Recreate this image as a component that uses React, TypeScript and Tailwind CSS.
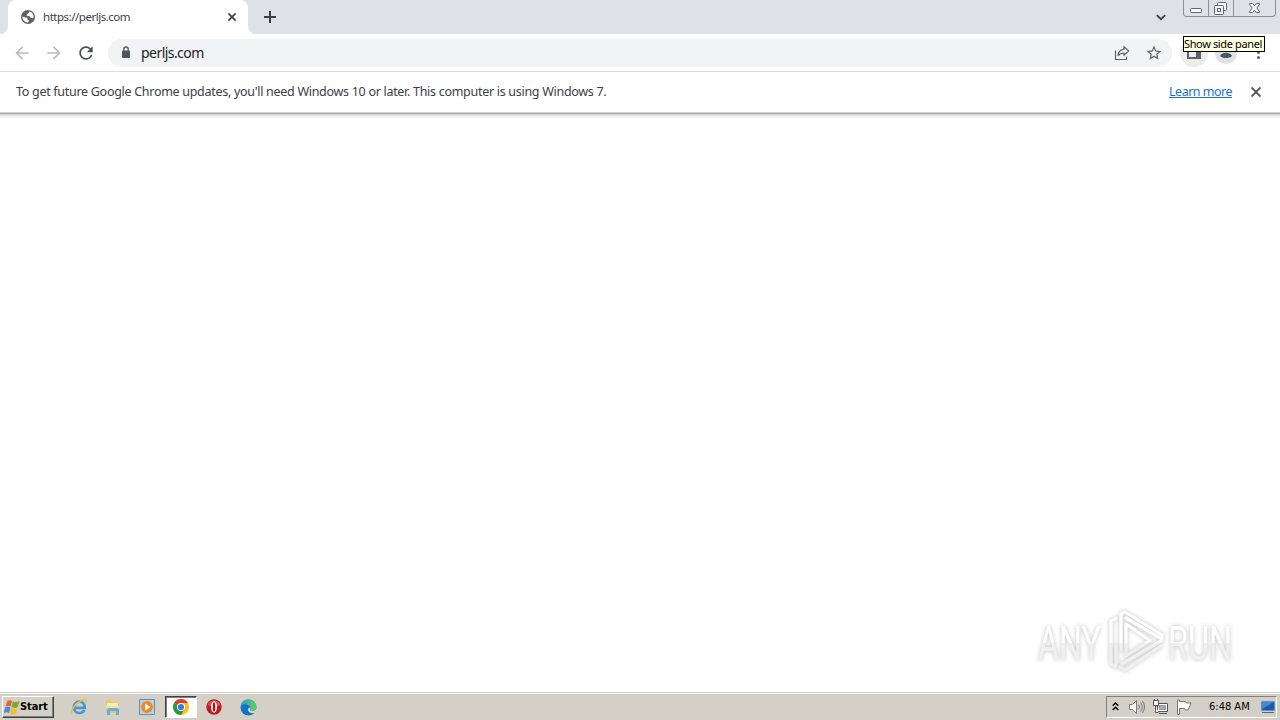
import React from 'react';
import { MdArrowBack, MdArrowForward, MdRefresh, MdStarBorder } from 'react-icons/md';

const TabStrip: React.FC = () => (
  <div className="h-[34px] flex bg-[#dee1e6] text-[#3c4043]">
    <div className="w-2 bg-white">
      <div className="h-full bg-[#dee1e6] rounded-br-lg" />
    </div>
    <div className="w-60 h-full flex items-center bg-white rounded-t-lg pl-[13px] pr-3">
      <svg className="w-[14px] h-[14px] shrink-0" viewBox="0 0 14 14">
        <circle cx="7" cy="7" r="7" fill="#5f6368" />
        <path d="M1.5 6.4 4.2 7.6 6.4 7.8V9.5L8 10.600 7 12.5C4 12.400 1.300 9.900 1.500 6.400ZM8.200 1.600 7.500 3.300 5.700 4.300V5.700L8.600 6.200 9.200 7.500 11.600 8.200C12.200 7.700 12.600 7.100 12.600 6.500 12.400 3.700 10.500 2 8.200 1.600Z" fill="#fff" />
      </svg>
      <span className="ml-2 text-[11.5px] leading-4 whitespace-nowrap tracking-[-0.48px]">https://perljs.com</span>
      <svg className="ml-auto w-2 h-2" viewBox="0 0 8 8" stroke="currentColor" strokeWidth="1.7">
        <path d="m.4.4 7.200 7.200M7.600.4.4 7.600" />
      </svg>
    </div>
    <div className="w-2 bg-white">
      <div className="h-full bg-[#dee1e6] rounded-bl-lg" />
    </div>
    <div className="flex-1 flex items-center">
      <svg className="ml-2 w-3 h-3" viewBox="0 0 12 12" stroke="currentColor" strokeWidth="2">
        <path d="M6 0v12M0 6h12" />
      </svg>
      <svg className="ml-auto mr-[17px] w-[10px] h-[7px]" viewBox="0 0 10 7" fill="none" stroke="currentColor" strokeWidth="1.8">
        <path d="m.8 1.2 4.2 4 4.2-4" />
      </svg>
      <WindowButtons />
    </div>
  </div>
);

const WindowButtons: React.FC = () => (
  <div className="self-start mr-1 w-[93px] h-[17px] flex border border-t-0 border-[#8b8f96] rounded-b-[4px] text-[#62666c]">
    <div className="w-[25px] border-r border-[#8b8f96]">
      <svg className="w-6 h-4" viewBox="0 0 24 16" fill="#f4f5f6" stroke="currentColor">
        <rect x="6.5" y="8.5" width="11" height="4" rx="1" />
      </svg>
    </div>
    <div className="w-[25px] border-r border-[#8b8f96]">
      <svg className="w-6 h-4" viewBox="0 0 24 16" fill="#f4f5f6" stroke="currentColor">
        <rect x="8.5" y="2.5" width="9" height="8" rx="1" />
        <rect x="5.5" y="5.5" width="9" height="9" rx="1" />
        <rect x="8.5" y="8.5" width="3" height="3" />
      </svg>
    </div>
    <svg className="w-[41px] h-4" viewBox="0 0 41 16" fill="#f4f5f6" stroke="currentColor">
      <path d="M15.500 3.500h3.200l1.800 2.200 1.800-2.200h3.200v1L22.800 8l2.700 3.500v1h-3.200l-1.800-2.200-1.800 2.200h-3.200v-1L18.200 8l-2.700-3.500z" />
    </svg>
  </div>
);

const Toolbar: React.FC = () => (
  <div className="h-[38px] flex items-center bg-white border-b border-[#dadce0] text-[#5f6368]">
    <MdArrowBack className="ml-3 w-5 h-5 text-[#babcbe]" />
    <MdArrowForward className="ml-3 w-5 h-5 text-[#babcbe]" />
    <MdRefresh className="ml-3 w-5 h-5 text-[#4a4d51]" />
    <div className="ml-3 w-[1064px] h-7 flex items-center rounded-full bg-[#f1f3f4] pl-[14px] pr-[9px]">
      <svg className="mb-px w-2 h-3" viewBox="0 0 8 12">
        <path d="M1.800 5V3.200a2.200 2.200 0 0 1 4.400 0V5" fill="none" stroke="#5f6368" strokeWidth="1.400" />
        <rect y="4.500" width="8" height="7.500" rx="1" fill="#505458" />
      </svg>
      <span className="ml-[11px] text-[14px] leading-5 tracking-[-0.550px] text-[#202124]">perljs.com</span>
      <svg className="ml-auto w-4 h-4" viewBox="0 0 16 16" fill="none" stroke="currentColor" strokeWidth="1.200">
        <path d="M1.500 5.500v9h11v-3" />
        <path d="M10 1.800 14.700 6 10 10.200V8C7 8 5.200 9 4 10.800 4.300 7.400 6.200 4.700 10 4.200z" />
      </svg>
      <MdStarBorder className="ml-[15px] w-[18px] h-[18px]" />
    </div>
    <div className="ml-2 w-7 h-7 rounded-full bg-[#ececed] flex items-center justify-center">
      <svg className="w-[14px] h-[14px]" viewBox="0 0 14 14">
        <path d="M1 2h12v10H1z" fill="none" stroke="#5f6368" strokeWidth="2" />
        <path d="M9 2h4v10H9z" fill="#5f6368" />
      </svg>
    </div>
    <div className="ml-[7px] w-[22px] h-[22px] rounded-full bg-[#dee1e6] flex items-center justify-center">
      <svg className="w-[14px] h-[14px]" viewBox="0 0 14 14" fill="#4b5563">
        <circle cx="7" cy="3" r="2.800" />
        <path d="M1 10C2 7.700 4.500 6.800 7 6.800s5 .9 6 3.200c-1.500 1.500-3.500 2-6 2s-4.500-.5-6-2Z" />
      </svg>
    </div>
    <svg className="ml-5 w-[3px] h-[13px]" viewBox="0 0 3 13" fill="#5f6368">
      <circle cx="1.500" cy="1.500" r="1.500" />
      <circle cx="1.500" cy="6.500" r="1.500" />
      <circle cx="1.500" cy="11.500" r="1.500" />
    </svg>
  </div>
);

const InfoBar: React.FC = () => (
  <div>
    <div className="h-10 flex items-center bg-white pl-4 pr-[19px] text-[12.5px] leading-4 text-[#3c4043]">
      <span className="whitespace-nowrap tracking-[-0.290px]">
        To get future Google Chrome updates, you'll need Windows 10 or later. This computer is using Windows 7.
      </span>
      <a className="ml-auto underline text-[#1a73c8] whitespace-nowrap tracking-[-0.500px]">Learn more</a>
      <svg className="ml-[19px] w-[10px] h-[10px]" viewBox="0 0 10 10" stroke="#505357" strokeWidth="1.900">
        <path d="m.5.5 9 9M9.500.5.5 9.500" />
      </svg>
    </div>
    <div className="h-px bg-[#cfcfcf]" />
    <div className="h-px bg-[#a9a9a9]" />
    <div className="h-px bg-[#d6d6d6]" />
    <div className="h-px bg-[#e3e3e3]" />
    <div className="h-[2px] bg-[#f3f3f3]" />
  </div>
);

const Watermark: React.FC = () => (
  <svg className="w-[210px] h-[72px] overflow-visible [filter:drop-shadow(0_0_2px_rgba(0,0,0,0.25))]" viewBox="0 0 210 72">
    <defs>
      <linearGradient id="wm" x1="0" y1="0" x2="0" y2="72" gradientUnits="userSpaceOnUse">
        <stop offset="0.5" stopColor="#fff" />
        <stop offset="0.5" stopColor="#f0f0f0" />
      </linearGradient>
    </defs>
    <g fill="url(#wm)" fontFamily="Roboto, sans-serif" fontSize="49" fontWeight="400">
      <text x="8" y="53" textLength="63" lengthAdjust="spacingAndGlyphs">ANY</text>
      <text x="138" y="53" textLength="64" lengthAdjust="spacingAndGlyphs">RUN</text>
    </g>
    <g fill="none" stroke="url(#wm)" strokeWidth="3.200" strokeLinejoin="round" strokeLinecap="round">
      <path d="M86 11.500 81 14v43l5 3V39" />
      <path d="M91 43V7l4-2 37 23v4L96 11" />
      <path d="M96 17v32l24-15.500z" />
      <path d="M131 34 92 57M131 39 95 63l-5-3" />
    </g>
  </svg>
);

const StartButton: React.FC = () => (
  <div className="w-[52px] h-[22px] flex items-center pl-px bg-[#d4d0c8] border border-t-white border-l-white border-r-[#404040] border-b-[#404040] shadow-[inset_-1px_-1px_0_#808080]">
    <svg className="w-4 h-4 shrink-0" viewBox="0 0 16 16">
      <path d="M3.200 2C5 .7 6.600 1 8.100 2L6.600 7.500C5 6.500 3.500 6.500 1.500 7.500z" fill="#e7652d" />
      <path d="M8.900 2.300c2 1 3.800 1.100 6.600-.3L13.800 8c-2.300 1.300-4.200 1-6.300.1z" fill="#78ad32" />
      <path d="M1.200 8.300c2-1 3.600-.9 5.200.1L5 14c-1.500-1-3-1-5.200 0z" fill="#4a8ed4" />
      <path d="M7.200 8.800c2.100 1 3.900 1 6.400-.2L12.200 14.500c-2 1.200-4.200 1.200-6.500.2z" fill="#f2bd32" />
    </svg>
    <span className="font-['DejaVu_Sans_Condensed','DejaVu_Sans',sans-serif] font-bold text-[11px] leading-4 tracking-[-0.100px] text-black">Start</span>
  </div>
);

const QuickLaunch: React.FC = () => (
  <div className="flex items-center">
    <svg className="ml-4 w-[18px] h-[18px]" viewBox="0 0 18 18" fill="none">
      <path d="M4.500 9.800h10.300c.1-3.800-2.200-6.100-5.400-6.100-3.400 0-5.600 2.500-5.600 5.700s2.400 5.600 5.600 5.600c2.300 0 4-1 4.900-3" stroke="#4698d0" strokeWidth="2.700" />
      <path d="M1.700 16.300C-.7 13.500 5.500 5.200 12 2.200c3.800-1.700 5-.3 4.300 2.300" stroke="#e7bf43" strokeWidth="1.500" />
    </svg>
    <svg className="ml-[17px] w-4 h-4" viewBox="0 0 16 16">
      <path d="M1 1h5l1 2h7v11H1z" fill="#e9c961" />
      <path d="M2 4h11v7H2z" fill="#fff0a8" />
      <path d="M1 7h13v2H1z" fill="#dfe5c0" />
      <path d="M2 16v-5q0-2 2-2h8q2 0 2 2v5h-3v-4H5v4z" fill="#68afd7" />
    </svg>
    <svg className="ml-[18px] w-4 h-4" viewBox="0 0 16 16">
      <path d="M.5.5h15v15H.5z" fill="#b9d3e6" stroke="#5d91bb" />
      <circle cx="8" cy="8" r="6" fill="#f18a1c" />
      <path d="M6 4.500v7L11.500 8z" fill="#fff" />
    </svg>
    <div className="ml-[10px] w-8 h-[22px] bg-white border border-t-[#404040] border-l-[#404040] border-r-white border-b-white shadow-[inset_1px_1px_0_#808080] flex items-center justify-center">
      <svg className="w-4 h-4" viewBox="0 0 16 16">
        <circle cx="8" cy="8" r="8" fill="#fbc116" />
        <path d="M8 8 1.100 4A8 8 0 0 1 14.900 4H8z" fill="#e33b2e" />
        <path d="m8 8-6.900-4A8 8 0 0 0 8 16l3.500-6z" fill="#279847" />
        <circle cx="8" cy="8" r="4" fill="#fff" />
        <circle cx="8" cy="8" r="3.100" fill="#3b78e7" />
      </svg>
    </div>
    <svg className="ml-[9px] w-4 h-4" viewBox="0 0 16 16">
      <circle cx="8" cy="8" r="7.700" fill="#bd1c20" />
      <path d="M1.500 6a7 7 0 0 1 13 0q-6 3-13 0Z" fill="#d65652" />
      <ellipse cx="8" cy="8" rx="3" ry="5.700" fill="#fff" />
      <ellipse cx="8" cy="8" rx="1.300" ry="4.800" fill="#a5181c" />
    </svg>
    <svg className="ml-[18px] w-[17px] h-[17px]" viewBox="0 0 17 17">
      <defs>
        <linearGradient id="edge" x1="0" y1="0" x2="1" y2="0">
          <stop offset="0" stopColor="#249dd7" />
          <stop offset="1" stopColor="#62d357" />
        </linearGradient>
      </defs>
      <circle cx="8.500" cy="8.500" r="8" fill="#1671c7" />
      <path d="M.6 7A8 8 0 0 1 16.500 8c0 3-2.300 4-5.500 3.600-2-.2-.7-1.500-.8-2.700C9.800 5.300 4 4 .6 7Z" fill="url(#edge)" />
      <path d="M10.200 8.800c-.1 1.500-.8 2.600 1.300 2.800 2.500.2 4-.5 5.500-2.100v3.500l-1.700 1c-4 1-8-1-7.200-4 .3-1 1-1.500 2.100-1.200Z" fill="#d4d0c8" />
    </svg>
  </div>
);

const Tray: React.FC = () => (
  <div className="ml-auto mr-[3px] w-[171px] h-[22px] flex items-center border border-t-[#808080] border-l-[#808080] border-r-white border-b-white text-black">
    <svg className="ml-[5px] mb-[2px] w-[7px] h-[9px]" viewBox="0 0 7 9" fill="none" stroke="#000" strokeWidth="1.400">
      <path d="m.7 3.800 2.800-2.800 2.800 2.800M.7 8l2.800-2.800L6.300 8" />
    </svg>
    <svg className="ml-[9px] w-[17px] h-4" viewBox="0 0 17 16" fill="none" stroke="#777">
      <path d="M1.500 5.500h3l4-4v13l-4-4h-3z" fill="#fff" />
      <path d="M10.500 5.500q2 2.500 0 5M12.500 3.500q3.500 4.500 0 9M14.500 2q4 6 0 12" />
    </svg>
    <svg className="ml-[7px] w-[17px] h-4" viewBox="0 0 17 16" fill="#fff" stroke="#555">
      <path d="M5.500 4.500h10v8h-10zM7 14.500h8" />
      <path d="M7.500 6.500h6v4h-6z" fill="#aaa" stroke="#999" />
      <path d="M1.500 1.500h5v5h-5zM2.500 2V0M5.500 2V0M3.500 6.500v7h3" />
    </svg>
    <svg className="ml-[7px] w-[17px] h-4" viewBox="0 0 17 16" fill="#fff" stroke="#777">
      <path d="M1.500 1v14.500h2V9.500h5l1 1.500h2.500l3-7h-4.500l-1-1.500h-6V1z" />
    </svg>
    <span className="ml-4 font-['DejaVu_Sans_Condensed','DejaVu_Sans',sans-serif] text-[11px] leading-4 tracking-[0px] whitespace-nowrap">6:48 AM</span>
    <svg className="ml-auto w-4 h-4" viewBox="0 0 16 16">
      <path d="M1 2h14v10H1z" fill="#1e59a7" stroke="#b5cbe1" />
      <path d="m2 3 12 0L2 10z" fill="#4085cf" />
      <path d="M2 13h12v1H2z" fill="#526b86" />
    </svg>
  </div>
);

const Taskbar: React.FC = () => (
  <div className="h-[28px] bg-[#d4d0c8] border-t border-[#d4d0c8]">
    <div className="h-[27px] border-t border-white flex items-center pl-[2px]">
      <StartButton />
      <QuickLaunch />
      <Tray />
    </div>
  </div>
);

const App: React.FC = () => {
  return (
    <div className="relative w-[1280px] h-[720px] flex flex-col overflow-hidden bg-white font-['Noto_Sans','Open_Sans',sans-serif]">
      <TabStrip />
      <Toolbar />
      <InfoBar />
      <main className="flex-1 flex items-end justify-end pr-[40px] pb-[13px]">
        <Watermark />
      </main>
      <Taskbar />
      <div className="absolute left-[1183px] top-[36px] w-[82px] h-4 bg-[#ffffe1] border border-black text-[11px] leading-[14px] text-black whitespace-nowrap tracking-[-0.370px]">
        Show side panel
      </div>
    </div>
  );
};

export default App;
